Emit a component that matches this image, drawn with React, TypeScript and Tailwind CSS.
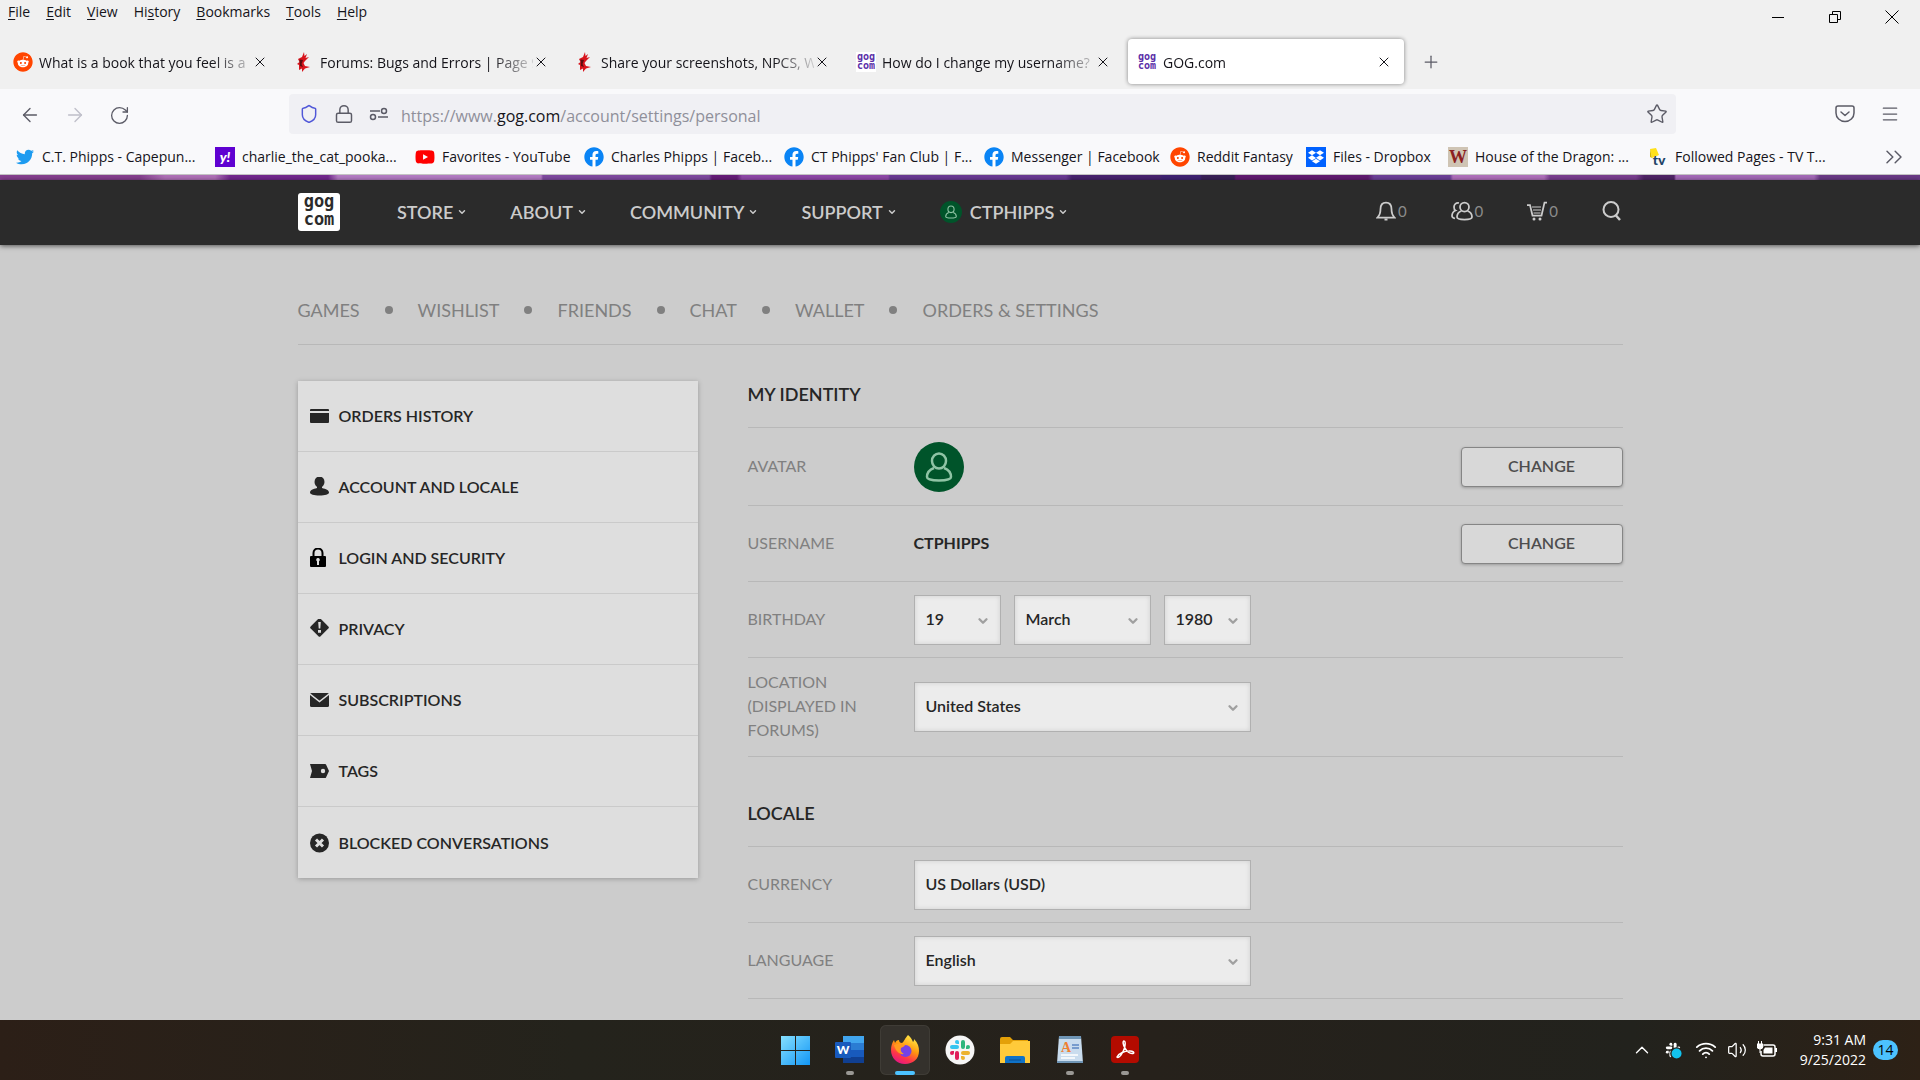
import React, { useState } from 'react';
import {
  ArrowLeft,
  ArrowRight,
  ChevronDown,
  ChevronUp,
  ChevronsRight,
  Lock,
  Menu,
  Plus,
  RotateCw,
  Shield,
  Star,
  Volume2,
  Wifi,
  X,
} from 'lucide-react';
import { FaDropbox, FaFacebook, FaReddit, FaTwitter, FaYoutube } from 'react-icons/fa';

const MENUS: [string, string, string][] = [
  ['', 'F', 'ile'],
  ['', 'E', 'dit'],
  ['', 'V', 'iew'],
  ['Hi', 's', 'tory'],
  ['', 'B', 'ookmarks'],
  ['', 'T', 'ools'],
  ['', 'H', 'elp'],
];

function RedditIcon() {
  return (
    <span className="flex size-5 rounded-full bg-white">
      <FaReddit className="size-5 text-[#ff4500]" />
    </span>
  );
}

function FacebookIcon() {
  return (
    <span className="flex size-5 rounded-full bg-white">
      <FaFacebook className="size-5 text-[#0a84f5]" />
    </span>
  );
}

function ProjektIcon() {
  return (
    <svg viewBox="0 0 20 20" className="size-5">
      <path d="M4 7 8 5 10 0 10.500 4 13 2 11.500 6 15 5 11 9 9.500 11 11 14 16 15 11 16.500 8 20 8 16.500 5 18 5 13 3 12 5.500 10z" fill="#d8141c" />
      <path d="M5.500 7.500 9 8 7.500 12 9 15 6 14z" fill="#5c0d10" />
    </svg>
  );
}

function GogIcon() {
  return (
    <svg viewBox="0 0 20 20" className="size-5 bg-white">
      <g fill="#5b2fa8" fontFamily="'DejaVu Sans Mono', monospace" fontWeight="700" fontSize="10" textAnchor="middle">
        <text x="10" y="8">gog</text>
        <text x="10" y="17">com</text>
      </g>
    </svg>
  );
}

function YahooIcon() {
  return (
    <span className="flex size-5 items-center justify-center bg-[#5f01d1] font-['Lato',sans-serif] text-sm font-black italic text-white">
      y!
    </span>
  );
}

function YoutubeIcon() {
  return <FaYoutube className="size-5 text-[#ff0000]" />;
}

function DropboxIcon() {
  return (
    <span className="flex size-5 items-center justify-center bg-[#0061ff]">
      <FaDropbox className="size-4 text-white" />
    </span>
  );
}

function WesterosIcon() {
  return (
    <span className="flex size-5 items-center justify-center bg-[#cfc4b4] font-['Liberation_Serif',serif] text-lg leading-5 font-bold text-[#8c1f22]">
      W
    </span>
  );
}

function TropesIcon() {
  return (
    <svg viewBox="0 0 20 20" className="size-5">
      <path d="M2 2 8 1 11 8 4 11z" fill="#ffe11a" />
      <path d="M2 2 4 11 2 10z" fill="#d8b800" />
      <text x="11" y="18" textAnchor="middle" fontFamily="Lato, sans-serif" fontWeight="900" fontSize="14" fill="#1f4467">
        tv
      </text>
    </svg>
  );
}

function TwitterIcon() {
  return <FaTwitter className="size-[18px] text-[#1d9bf0]" />;
}

const TABS = [
  { icon: RedditIcon, title: 'What is a book that you feel is a' },
  { icon: ProjektIcon, title: 'Forums: Bugs and Errors | Page 9' },
  { icon: ProjektIcon, title: 'Share your screenshots, NPCS, W' },
  { icon: GogIcon, title: 'How do I change my username?' },
  { icon: GogIcon, title: 'GOG.com', active: true },
];

const BOOKMARKS = [
  { icon: TwitterIcon, title: 'C.T. Phipps - Capepun...', width: 'w-[200px]' },
  { icon: YahooIcon, title: 'charlie_the_cat_pooka...', width: 'w-[200px]' },
  { icon: YoutubeIcon, title: 'Favorites - YouTube', width: 'w-[169px]' },
  { icon: FacebookIcon, title: 'Charles Phipps | Faceb...', width: 'w-[200px]' },
  { icon: FacebookIcon, title: "CT Phipps' Fan Club | F...", width: 'w-[200px]' },
  { icon: FacebookIcon, title: 'Messenger | Facebook', width: 'w-[186px]' },
  { icon: RedditIcon, title: 'Reddit Fantasy', width: 'w-[136px]' },
  { icon: DropboxIcon, title: 'Files - Dropbox', width: 'w-[142px]' },
  { icon: WesterosIcon, title: 'House of the Dragon: ...', width: 'w-[200px]' },
  { icon: TropesIcon, title: 'Followed Pages - TV T...', width: 'w-[200px]' },
];

function Browser() {
  return (
    <header className="shrink-0 bg-[#f0f0f0] font-['Open_Sans','Noto_Sans',sans-serif] text-sm text-[#15141a]">
      <div className="flex h-[34px] items-start justify-between">
        <nav className="flex gap-4 pt-0.5 pl-2">
          {MENUS.map(([pre, key, post]) => (
            <button key={key + post} type="button">
              {pre}
              <span className="underline underline-offset-2">{key}</span>
              {post}
            </button>
          ))}
        </nav>
        <div className="flex h-[34px] items-center gap-[41px] pr-5 text-black">
          <button type="button" aria-label="Minimize">
            <svg viewBox="0 0 16 16" className="size-4" stroke="currentColor">
              <path d="M2 8.500h12" />
            </svg>
          </button>
          <button type="button" aria-label="Restore">
            <svg viewBox="0 0 16 16" className="size-4" fill="none" stroke="currentColor">
              <path d="M2.500 5.500h8v8h-8zM5.500 5.500v-3h8v8h-3" />
            </svg>
          </button>
          <button type="button" aria-label="Close">
            <svg viewBox="0 0 16 16" className="size-4" stroke="currentColor">
              <path d="M1.500 1.500l13 13M14.500 1.500l-13 13" />
            </svg>
          </button>
        </div>
      </div>

      <div className="flex h-[55px] items-center gap-[5px] pl-1">
        {TABS.map(({ icon: Icon, title, active }) => (
          <div
            key={title}
            className={`flex h-[45px] w-[276px] min-w-0 items-center rounded pr-3 pl-[9px] ${
              active ? 'bg-white shadow-[0_0_4px_rgba(0,0,0,0.45)]' : ''
            }`}
          >
            <Icon />
            <span className="ml-1.5 flex-1 overflow-hidden [mask-image:linear-gradient(to_left,rgba(0,0,0,0.15),black_40px)] pt-0.5 whitespace-nowrap">
              {title}
            </span>
            <button type="button" aria-label="Close tab" className="flex size-4 items-center justify-center">
              <X className="size-4 shrink-0" strokeWidth={1.5} />
            </button>
          </div>
        ))}
        <button type="button" aria-label="New tab" className="ml-3 text-[#5b5b66]">
          <Plus className="size-5" strokeWidth={1.5} />
        </button>
      </div>

      <div className="border-b border-[#c4c4c4] bg-[#f9f9fb]">
        <div className="flex h-[50px] items-center text-[#5b5b66]">
          <div className="flex w-[289px] shrink-0 items-center gap-[23px] pt-0.5 pl-[19px]">
            <button type="button" aria-label="Back">
              <ArrowLeft className="size-[22px]" strokeWidth={1.5} />
            </button>
            <button type="button" aria-label="Forward" className="text-[#bfbfc9]">
              <ArrowRight className="size-[22px]" strokeWidth={1.5} />
            </button>
            <button type="button" aria-label="Reload">
              <RotateCw className="size-[21px]" strokeWidth={1.5} />
            </button>
          </div>
          <div className="flex h-10 flex-1 items-center rounded bg-[#f0f0f4] pr-2 pl-2.5 text-base">
            <Shield className="size-5 text-[#5057d8]" strokeWidth={1.75} />
            <Lock className="ml-[15px] size-5" strokeWidth={1.75} />
            <svg viewBox="0 0 20 20" className="ml-[15px] size-5" fill="none" stroke="currentColor" strokeWidth="1.500">
              <path d="M1 7h10M9 13h10" />
              <circle cx="15" cy="7" r="2.500" />
              <circle cx="4" cy="13" r="2.500" />
            </svg>
            <span className="ml-3 flex-1 pt-1 text-[#8f8f9a]">
              https://www.<span className="text-[#15141a]">gog.com</span>/account/settings/personal
            </span>
            <button type="button" aria-label="Bookmark this page">
              <Star className="size-[22px]" strokeWidth={1.5} />
            </button>
          </div>
          <div className="flex w-[244px] shrink-0 items-center justify-end gap-[25px] pr-5">
            <button type="button" aria-label="Save to Pocket">
              <svg viewBox="0 0 20 20" className="size-5" fill="none" stroke="currentColor" strokeWidth="1.500" strokeLinecap="round" strokeLinejoin="round">
                <path d="M3 2h14a2 2 0 0 1 2 2v5a9 8.500 0 0 1-18 0V4a2 2 0 0 1 2-2z" />
                <path d="M6 8l4 3.500L14 8" />
              </svg>
            </button>
            <button type="button" aria-label="Open menu">
              <Menu className="size-5" strokeWidth={1.5} />
            </button>
          </div>
        </div>
        <div className="flex h-[35px] items-center pr-3 pl-[15px]">
          {BOOKMARKS.map(({ icon: Icon, title, width }) => (
            <a key={title} href="#" className={`flex shrink-0 items-center gap-[7px] whitespace-nowrap ${width}`}>
              <span className="flex w-5 shrink-0 justify-center">
                <Icon />
              </span>
              {title}
            </a>
          ))}
          <button type="button" aria-label="More bookmarks" className="ml-auto text-[#5b5b66]">
            <ChevronsRight className="size-7" strokeWidth={1.25} />
          </button>
        </div>
      </div>
    </header>
  );
}

function UserGlyph({ className }: { className: string }) {
  return (
    <svg viewBox="0 0 50 50" className={className}>
      <circle cx="25" cy="25" r="25" fill="#00542a" />
      <g fill="none" stroke="#8fc4a5" strokeWidth="2.500">
        <ellipse cx="25" cy="19" rx="7" ry="7.500" />
        <path d="M20 26c-4 1.500-7 5-7 9 0 2 4 3.500 12 3.500s12-1.500 12-3.500c0-4-3-7.500-7-9" />
      </g>
    </svg>
  );
}

function NavChevron() {
  return <ChevronDown className="size-2.5" strokeWidth={3.5} />;
}

function SiteNav() {
  return (
    <div className="shrink-0 font-['Lato',sans-serif]">
      <div className="h-[5px] bg-[linear-gradient(90deg,#86408f_0_140px,#b071b8_165px_215px,#73288f_230px_328px,#b47cc4_338px_541px,#7f4aa0_543px_709px,#661c78_712px_737px,#8f48a8_742px_888px,#6a3a94_890px_1066px,#48236f_1072px_1160px,#3f2272_1162px_1200px,#392057_1202px_1234px,#601a70_1236px_1368px,#6c4098_1374px_1450px,#b070bc_1453px_1544px,#7a3f90_1550px_1636px,#4f2466_1644px_1674px,#a46ab8_1676px_1814px,#6a3a86_1820px)]" />
      <div className="relative z-10 bg-[#2b2b2b] text-[#cccccc] shadow-[0_1px_5px_rgba(0,0,0,0.6)]">
        <div className="mx-auto flex h-[65px] max-w-[1324px] items-center pb-0.5 text-lg font-semibold">
          <a href="#" aria-label="GOG.com">
            <svg viewBox="0 0 42 38" className="h-[38px] w-[42px]">
              <rect width="42" height="38" rx="3" fill="#fff" />
              <g fill="#2b2b2b" fontFamily="'DejaVu Sans Mono', monospace" fontWeight="700" fontSize="17" textAnchor="middle">
                <text x="21" y="14">gog</text>
                <text x="21" y="32">com</text>
              </g>
            </svg>
          </a>
          <nav className="ml-[57px] flex flex-1 items-center gap-[43px]">
            {['STORE', 'ABOUT', 'COMMUNITY', 'SUPPORT'].map((item) => (
              <a key={item} href="#" className="flex items-center gap-1">
                {item}
                <NavChevron />
              </a>
            ))}
            <a href="#" className="flex items-center gap-1">
              <UserGlyph className="mr-1 size-[22px]" />
              CTPHIPPS
              <NavChevron />
            </a>
          </nav>
          <div className="flex items-center gap-11 text-[15px] font-normal text-[#8c8c8c]">
            <button type="button" aria-label="Notifications" className="flex items-center gap-0.5">
              <svg viewBox="0 0 20 20" className="size-5 text-[#cccccc]" fill="none" stroke="currentColor" strokeWidth="1.750">
                <path d="M1.500 16.500c2-2 3-4 3-8.500 0-4 2-6.500 5.500-6.500s5.500 2.500 5.500 6.500c0 4.500 1 6.500 3 8.500z" />
                <path d="M8.500 18.500h3" strokeWidth="2" />
              </svg>
              0
            </button>
            <button type="button" aria-label="Friends" className="flex items-center gap-0.5">
              <svg viewBox="0 0 22 20" className="h-5 w-[22px] text-[#cccccc]" fill="none" stroke="currentColor" strokeWidth="1.750">
                <circle cx="13.500" cy="6" r="4.500" />
                <path d="M10.500 10c-3 1-4.500 3-4.500 6 0 2 3 2.500 7.500 2.500S21 18 21 16c0-3-1.500-5-4.500-6" />
                <path d="M8 2C5 1.500 3 3.500 3 6c0 1.500.5 3 1.500 3.500C2 10.500 1 12.500 1 15c0 1.500 1 2 3 2.500" />
              </svg>
              0
            </button>
            <button type="button" aria-label="Cart" className="flex items-center gap-0.5">
              <svg viewBox="0 0 20 20" className="size-5 text-[#cccccc]" fill="none" stroke="currentColor" strokeWidth="1.750">
                <path d="M0 4h3l2.500 10.500h9L17.500 1.500H20" />
                <path d="M5 6h9M6 9h8M6.500 12h7" strokeWidth="1" />
                <circle cx="7" cy="18" r="1.500" fill="currentColor" stroke="none" />
                <circle cx="13" cy="18" r="1.500" fill="currentColor" stroke="none" />
              </svg>
              0
            </button>
            <button type="button" aria-label="Search">
              <svg viewBox="0 0 20 20" className="size-5 text-[#cccccc]" fill="none" stroke="currentColor" strokeWidth="2">
                <circle cx="9" cy="8.500" r="7.500" />
                <path d="M13.500 14l4.500 5" strokeWidth="2.500" />
              </svg>
            </button>
          </div>
        </div>
      </div>
    </div>
  );
}

const SIDEBAR = [
  {
    label: 'ORDERS HISTORY',
    icon: <path d="M0 5V4a1 1 0 0 1 1-1h17a1 1 0 0 1 1 1v1zM0 7h19v9a1 1 0 0 1-1 1H1a1 1 0 0 1-1-1z" />,
  },
  {
    label: 'ACCOUNT AND LOCALE',
    icon: (
      <>
        <ellipse cx="9.500" cy="5" rx="5" ry="5.500" />
        <path d="M7 9h5v2c4 1 7 2 7 4.500 0 2-4 3-9.500 3S0 17.500 0 15.500C0 13 3 12 7 11z" />
      </>
    ),
  },
  {
    label: 'LOGIN AND SECURITY',
    icon: (
      <>
        <path d="M3.500 9V5a4.500 4.500 0 0 1 9 0v4" fill="none" stroke="#000" strokeWidth="2" />
        <path
          fill="#000"
          fillRule="evenodd"
          d="M1 8h14a1 1 0 0 1 1 1v9a1 1 0 0 1-1 1H1a1 1 0 0 1-1-1V9a1 1 0 0 1 1-1zM8 10a1.800 1.800 0 0 0-1 3.300V17h2v-3.700A1.800 1.800 0 0 0 8 10z"
        />
      </>
    ),
  },
  {
    label: 'PRIVACY',
    icon: (
      <>
        <rect x="2.500" y="1.500" width="14" height="14" rx="1.500" transform="rotate(45 9.500 8.500)" />
        <path d="M8.200 3h2.600l-.5 6.500H8.700zM8 11h3v2.800H8z" fill="#dedede" />
      </>
    ),
  },
  {
    label: 'SUBSCRIPTIONS',
    icon: (
      <>
        <rect y="3" width="19" height="14" rx="1.500" />
        <path d="M0 4l9.500 7.500L19 4" fill="none" stroke="#dedede" strokeWidth="1.500" />
      </>
    ),
  },
  {
    label: 'TAGS',
    icon: (
      <path
        fillRule="evenodd"
        d="M0 3h15a1 1 0 0 1 1 .5l3 6.500-3 6.500a1 1 0 0 1-1 .5H0l2-7zM13 7.800a2.200 2.200 0 1 0 0 4.400 2.200 2.200 0 0 0 0-4.400z"
      />
    ),
  },
  {
    label: 'BLOCKED CONVERSATIONS',
    icon: (
      <>
        <circle cx="9.500" cy="10" r="9.500" />
        <path d="M6 6.500l7 7M13 6.500l-7 7" stroke="#dedede" strokeWidth="3" />
      </>
    ),
  },
];

function Sidebar() {
  return (
    <nav className="w-[400px] shrink-0 divide-y divide-[#cacaca] self-start bg-[#dedede] text-base font-semibold text-[#262626] shadow-[0_1px_5px_rgba(0,0,0,0.25)]">
      {SIDEBAR.map(({ label, icon }) => (
        <a key={label} href="#" className="flex h-[71px] items-center gap-2.5 px-3">
          <svg viewBox="0 0 19 20" className="h-5 w-[19px]" fill="#262626">
            {icon}
          </svg>
          {label}
        </a>
      ))}
    </nav>
  );
}

interface RowProps {
  label: string;
  htmlFor?: string;
  height?: string;
  children: React.ReactNode;
}

function Row({ label, htmlFor, height = 'min-h-[76px]', children }: RowProps) {
  return (
    <div className={`flex items-center border-b border-[#b8b8b8] ${height}`}>
      <label htmlFor={htmlFor} className="w-[166px] shrink-0 pr-12 pb-0.5 leading-6 text-[#808080]">
        {label}
      </label>
      {children}
    </div>
  );
}

interface PickerProps {
  id: string;
  options: string[];
  width: string;
  label?: string;
}

function Picker({ id, options, width, label }: PickerProps) {
  const [value, setValue] = useState(options[0]);

  return (
    <div className={`relative ${width}`}>
      <select
        id={id}
        aria-label={label}
        value={value}
        onChange={(e) => setValue(e.target.value)}
        className="h-[50px] w-full appearance-none border border-[#b0b0b0] bg-[#ececec] pb-0.5 pl-[11px] font-semibold text-[#262626] shadow-[inset_0_0_5px_rgba(0,0,0,0.12)]"
      >
        {options.map((o) => (
          <option key={o}>{o}</option>
        ))}
      </select>
      <ChevronDown
        className="pointer-events-none absolute top-[19px] right-[11px] size-3.5 text-[#a0a0a0]"
        strokeWidth={4}
      />
    </div>
  );
}

function ChangeButton({ label }: { label: string }) {
  return (
    <button
      type="button"
      aria-label={label}
      className="ml-auto h-10 w-[162px] rounded border border-[#858585] bg-[#d8d8d8] pb-0.5 font-semibold text-[#4d4d4d] shadow-[0_1px_3px_rgba(0,0,0,0.25)]"
    >
      CHANGE
    </button>
  );
}

function SectionTitle({ children }: { children: React.ReactNode }) {
  return <h2 className="border-b border-[#b8b8b8] pb-5 text-lg leading-[26px] font-semibold text-[#262626]">{children}</h2>;
}

const ACCOUNT_LINKS = ['GAMES', 'WISHLIST', 'FRIENDS', 'CHAT', 'WALLET', 'ORDERS & SETTINGS'];

function AccountPage() {
  return (
    <main className="flex-1 overflow-hidden bg-[#cccccc] font-['Lato',sans-serif]">
      <div className="mx-auto max-w-[1325px]">
        <nav className="flex h-[100px] items-center gap-[25px] border-b border-[#b8b8b8] pt-[30px] text-lg font-normal text-[#808080]">
          {ACCOUNT_LINKS.map((link, i) => (
            <React.Fragment key={link}>
              {i > 0 && <span className="size-2 rounded-full bg-[#808080]" />}
              <a href="#">{link}</a>
            </React.Fragment>
          ))}
        </nav>

        <div className="flex gap-[50px] pt-9">
          <Sidebar />
          <div className="min-w-0 flex-1 text-base">
            <section>
              <SectionTitle>MY IDENTITY</SectionTitle>
              <Row label="AVATAR" height="min-h-[78px]">
                <UserGlyph className="size-[50px]" />
                <ChangeButton label="Change avatar" />
              </Row>
              <Row label="USERNAME">
                <span className="pb-0.5 font-bold text-[#262626]">CTPHIPPS</span>
                <ChangeButton label="Change username" />
              </Row>
              <Row label="BIRTHDAY" htmlFor="day">
                <div className="flex gap-[13px]">
                  <Picker id="day" options={['19']} width="w-[87px]" />
                  <Picker id="month" label="Month" options={['March']} width="w-[137px]" />
                  <Picker id="year" label="Year" options={['1980']} width="w-[87px]" />
                </div>
              </Row>
              <Row label="LOCATION (DISPLAYED IN FORUMS)" htmlFor="location" height="min-h-[99px]">
                <Picker id="location" options={['United States']} width="w-[337px]" />
              </Row>
            </section>

            <section className="pt-[43px]">
              <SectionTitle>LOCALE</SectionTitle>
              <Row label="CURRENCY" htmlFor="currency">
                <input
                  id="currency"
                  type="text"
                  readOnly
                  value="US Dollars (USD)"
                  className="h-[50px] w-[337px] border border-[#b0b0b0] bg-[#ececec] pb-0.5 pl-[11px] font-semibold text-[#262626] shadow-[inset_0_0_5px_rgba(0,0,0,0.12)]"
                />
              </Row>
              <Row label="LANGUAGE" htmlFor="language">
                <Picker id="language" options={['English']} width="w-[337px]" />
              </Row>
            </section>
          </div>
        </div>
      </div>
    </main>
  );
}

function SlackMark({ colors }: { colors: [string, string, string, string] }) {
  const [blue, green, yellow, red] = colors;
  return (
    <>
      <g fill={blue}>
        <rect x="4" y="9" width="9" height="4" rx="2" />
        <path d="M13 8h-2a2 2 0 1 1 2-2z" />
      </g>
      <g fill={green}>
        <rect x="15" y="4" width="4" height="9" rx="2" />
        <path d="M20 13v-2a2 2 0 1 1 2 2z" />
      </g>
      <g fill={yellow}>
        <rect x="15" y="15" width="9" height="4" rx="2" />
        <path d="M15 20h2a2 2 0 1 1-2 2z" />
      </g>
      <g fill={red}>
        <rect x="9" y="15" width="4" height="9" rx="2" />
        <path d="M8 15v2a2 2 0 1 1-2-2z" />
      </g>
    </>
  );
}

const APPS = [
  {
    name: 'Start',
    icon: (
      <>
        <defs>
          <linearGradient id="win" x1="0" y1="0" x2="1" y2="1">
            <stop offset="0" stopColor="#86e0ff" />
            <stop offset="1" stopColor="#1296f5" />
          </linearGradient>
        </defs>
        <path d="M1 1h14v14H1zM16 1h14v14H16zM1 16h14v14H1zM16 16h14v14H16z" fill="url(#win)" />
      </>
    ),
  },
  {
    name: 'Word',
    running: true,
    icon: (
      <>
        <path d="M8 1h21v7H8z" fill="#41a5ee" />
        <path d="M8 8h21v7H8z" fill="#2b7cd3" />
        <path d="M8 15h21v7H8z" fill="#185abd" />
        <path d="M8 22h21v6H8z" fill="#103f91" />
        <rect y="7" width="16" height="16" rx="1" fill="#185abd" />
        <text x="8" y="19" textAnchor="middle" fontFamily="Lato, sans-serif" fontWeight="900" fontSize="12" fill="#fff">
          W
        </text>
      </>
    ),
  },
  {
    name: 'Firefox',
    active: true,
    icon: (
      <>
        <defs>
          <linearGradient id="fox" x1="0.8" y1="0" x2="0.3" y2="1">
            <stop offset="0" stopColor="#fff44f" />
            <stop offset="0.45" stopColor="#ff980e" />
            <stop offset="0.75" stopColor="#ff3647" />
            <stop offset="1" stopColor="#e31587" />
          </linearGradient>
        </defs>
        <path d="M18 0c3 2 4 5 5 7 1-1 1-2 1-3 4 4 5 8 5 12 0 8-6 13-14 13S1 23 1 15c0-4 1-7 3-10l1 3c1-2 2-3 4-3 0 2 1 3 3 3 2-1 3-5 6-8z" fill="url(#fox)" />
        <circle cx="15.500" cy="16" r="6" fill="#7542e5" />
        <path d="M4 10c4-2 8-1 11 0-1 2-3 2-4 3-1 3 1 5 3 6-5 1-9-4-10-9z" fill="#ff9a1f" />
      </>
    ),
  },
  {
    name: 'Slack',
    icon: (
      <>
        <circle cx="15" cy="15" r="14.500" fill="#f6f6f6" />
        <g transform="translate(1 1)">
          <SlackMark colors={['#36c5f0', '#2eb67d', '#ecb22e', '#e01e5a']} />
        </g>
      </>
    ),
  },
  {
    name: 'File Explorer',
    icon: (
      <>
        <path d="M0 4a2 2 0 0 1 2-2h8l3 3h15v6H0z" fill="#e3a008" />
        <path d="M0 9h10l3-3h17v22H0z" fill="#ffca3a" />
        <path d="M5 28v-5a2 2 0 0 1 2-2h16a2 2 0 0 1 2 2v5z" fill="#0f72c8" />
        <path d="M9 25h12" stroke="#0a4f92" />
      </>
    ),
  },
  {
    name: 'WordPad',
    running: true,
    icon: (
      <>
        <path d="M4 1h22l2 27H2z" fill="#c9dcee" />
        <path d="M4 1h22v3H4z" fill="#6f95b5" />
        <text x="11" y="17" textAnchor="middle" fontFamily="'Liberation Serif', serif" fontWeight="700" fontSize="14" fill="#f08030">
          A
        </text>
        <path d="M17 10h7M17 13h7" stroke="#5c86c4" strokeWidth="1.500" />
        <path d="M6 20h17M6 23h14" stroke="#fff" strokeWidth="1.500" />
        <path d="M2 26h26v2H2z" fill="#6f95b5" />
      </>
    ),
  },
  {
    name: 'Acrobat',
    running: true,
    icon: (
      <>
        <rect x="1" y="1" width="28" height="27" rx="4" fill="#b30b00" />
        <path
          d="M7 22c2 2 6-4 7.500-9 1-4 1-7-.5-7s-1 4 1 7c2 3.500 5 6 8 5.500 2-.5 0-3-4-2.500-4 0-10 2-12 6z"
          fill="none"
          stroke="#fff"
          strokeWidth="1.500"
        />
      </>
    ),
  },
];

function Taskbar() {
  return (
    <footer className="grid h-[60px] shrink-0 grid-cols-[1fr_auto_1fr] items-center bg-[linear-gradient(90deg,#2c1f17,#24231c_30%,#26211b_60%,#22221d_85%,#2d2116)] font-['Open_Sans','Noto_Sans',sans-serif] text-sm text-white">
      <div />
      <div className="flex gap-[5px]">
        {APPS.map(({ name, icon, active, running }) => (
          <button
            key={name}
            type="button"
            aria-label={name}
            className={`flex h-[50px] w-[50px] flex-col items-center justify-between rounded-md pt-2.5 ${
              active ? 'bg-[#34312c] ring-1 ring-[#3f3c36] ring-inset' : ''
            }`}
          >
            <svg viewBox="0 0 30 30" className="size-[30px]">
              {icon}
            </svg>
            {active && <span className="h-1 w-5 rounded-full bg-[#4cc2ff]" />}
            {running && <span className="h-1 w-2 rounded-full bg-[#9a9894]" />}
          </button>
        ))}
      </div>
      <div className="flex items-center justify-end pr-[22px]">
        <ChevronUp className="size-[22px]" strokeWidth={1.5} />
        <svg viewBox="0 0 28 28" className="ml-2.5 size-5">
          <SlackMark colors={['#fff', '#fff', '#fff', '#fff']} />
          <circle cx="19" cy="19" r="8" fill="#12c3ee" stroke="#24201b" strokeWidth="2" />
        </svg>
        <Wifi className="ml-3 size-[22px]" strokeWidth={2} />
        <Volume2 className="ml-2.5 size-5" strokeWidth={1.5} />
        <svg viewBox="0 0 20 18" className="ml-2.5 h-[18px] w-5" fill="none" stroke="#fff" strokeWidth="1.500">
          <path d="M7 4h9a2 2 0 0 1 2 2v7a2 2 0 0 1-2 2H6a2 2 0 0 1-2-2v-3M19.500 7v4" />
          <path d="M8 6.500h7.500v6H6.500V9z" fill="#fff" stroke="none" />
          <path d="M1.500 0v3M4.500 0v3M0 3h6v2a3 3 0 0 1-6 0zM3 8v4" fill="#fff" strokeWidth="1" />
        </svg>
        <div className="ml-[23px] text-right leading-5">
          <div>9:31 AM</div>
          <div>9/25/2022</div>
        </div>
        <span className="ml-[7px] flex h-5 w-[25px] items-center justify-center rounded-full bg-[#4cc2ff] text-sm text-black">
          14
        </span>
      </div>
    </footer>
  );
}

export default function App() {
  return (
    <div className="flex h-screen flex-col overflow-hidden">
      <Browser />
      <SiteNav />
      <AccountPage />
      <Taskbar />
    </div>
  );
}
